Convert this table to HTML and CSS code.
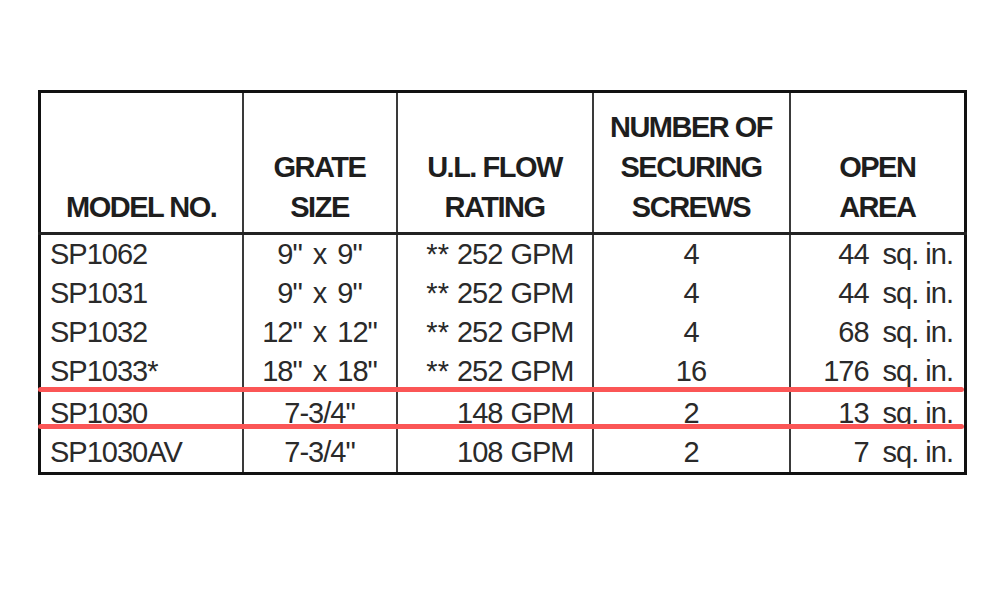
FILE: index.html
```html
<!DOCTYPE html>
<html lang="en">
<head>
<meta charset="utf-8">
<title>Grate specifications</title>
<link rel="stylesheet" href="styles.css">
</head>
<body>
<div class="page">
  <div class="wrap">
    <table class="spec">
      <colgroup>
        <col class="c1"><col class="c2"><col class="c3"><col class="c4"><col class="c5">
      </colgroup>
      <thead>
        <tr>
          <th>MODEL NO.</th>
          <th>GRATE<br>SIZE</th>
          <th>U.L. FLOW<br>RATING</th>
          <th>NUMBER OF<br>SECURING<br>SCREWS</th>
          <th>OPEN<br>AREA</th>
        </tr>
      </thead>
      <tbody>
        <tr><td class="model">SP1062</td><td class="mid size">9" x 9"</td><td class="flow"><span class="ast">**</span> 252 GPM</td><td class="mid">4</td><td class="area">44&nbsp; sq. in.</td></tr>
        <tr><td class="model">SP1031</td><td class="mid size">9" x 9"</td><td class="flow"><span class="ast">**</span> 252 GPM</td><td class="mid">4</td><td class="area">44&nbsp; sq. in.</td></tr>
        <tr><td class="model">SP1032</td><td class="mid size">12" x 12"</td><td class="flow"><span class="ast">**</span> 252 GPM</td><td class="mid">4</td><td class="area">68&nbsp; sq. in.</td></tr>
        <tr><td class="model">SP1033*</td><td class="mid size">18" x 18"</td><td class="flow"><span class="ast">**</span> 252 GPM</td><td class="mid">16</td><td class="area">176&nbsp; sq. in.</td></tr>
        <tr class="low"><td class="model">SP1030</td><td class="mid size">7-3/4"</td><td class="flow">148 GPM</td><td class="mid">2</td><td class="area">13&nbsp; sq. in.</td></tr>
        <tr><td class="model">SP1030AV</td><td class="mid size">7-3/4"</td><td class="flow">108 GPM</td><td class="mid">2</td><td class="area">7&nbsp; sq. in.</td></tr>
      </tbody>
    </table>
    <div class="mark mark-top"></div>
    <div class="mark mark-bottom"></div>
  </div>
</div>
</body>
</html>
```

FILE: styles.css
```css
html, body {
  margin: 0;
  padding: 0;
  background: #ffffff;
}

.page {
  padding: 90px 0 0 38px;
}

.wrap {
  position: relative;
  width: 926px;
}

.spec {
  border-collapse: collapse;
  table-layout: fixed;
  width: 926px;
  border: 3px solid #111;
  font-family: "Liberation Sans", Arial, sans-serif;
  color: #2a2a2a;
}

.c1 { width: 203px; }
.c2 { width: 154px; }
.c3 { width: 196px; }
.c4 { width: 197px; }
.c5 { width: 176px; }

.spec th {
  height: 134px;
  padding: 0 0 5px 0;
  vertical-align: bottom;
  text-align: center;
  font-weight: bold;
  font-size: 29px;
  line-height: 40px;
  letter-spacing: -1.5px;
  color: #1e1e1e;
  border-left: 2px solid #3a3a3a;
  border-bottom: 3px solid #222;
}

.spec td {
  height: 39px;
  padding: 0;
  font-size: 29px;
  line-height: 39px;
  letter-spacing: -1px;
  white-space: nowrap;
  vertical-align: top;
  border-left: 2px solid #3a3a3a;
}

.spec .low td {
  height: 36px;
  padding-top: 3px;
}

.spec .model {
  text-align: left;
  padding-left: 9px;
}

.spec .mid {
  text-align: center;
}

.spec .size {
  word-spacing: 4px;
}

.spec .flow {
  text-align: right;
  padding-right: 18px;
  word-spacing: 1px;
}

.spec .area {
  text-align: right;
  padding-right: 11px;
}

.ast {
  letter-spacing: 0;
}

.mark {
  position: absolute;
  left: 0;
  width: 926px;
  height: 5px;
  border-radius: 3px;
  background: #fb5656;
}

.mark-top {
  top: 297px;
}

.mark-bottom {
  top: 334px;
}
```
